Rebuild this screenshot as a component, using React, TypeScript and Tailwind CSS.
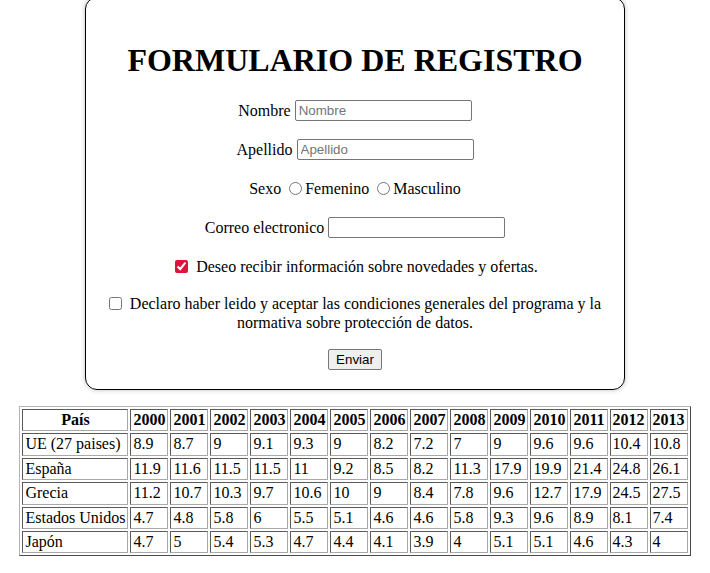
import React from "react";

const years = ["2000","2001","2002","2003","2004","2005","2006","2007","2008","2009","2010","2011","2012","2013"];
const rows: [string, string[]][] = [
  ["UE (27 paises)", ["8.9","8.7","9","9.1","9.3","9","8.2","7.2","7","9","9.6","9.6","10.4","10.8"]],
  ["España", ["11.9","11.6","11.5","11.5","11","9.2","8.5","8.2","11.3","17.9","19.9","21.4","24.8","26.1"]],
  ["Grecia", ["11.2","10.7","10.3","9.7","10.6","10","9","8.4","7.8","9.6","12.7","17.9","24.5","27.5"]],
  ["Estados Unidos", ["4.7","4.8","5.8","6","5.5","5.1","4.6","4.6","5.8","9.3","9.6","8.9","8.1","7.4"]],
  ["Japón", ["4.7","5","5.4","5.3","4.7","4.4","4.1","3.9","4","5.1","5.1","4.6","4.3","4"]],
];

const cell = "border border-t-[#5a5a5a] border-l-[#5a5a5a] border-b-[#a8a8a8] border-r-[#a8a8a8] py-[1px] px-[2px] leading-[18.4px]";

export default function App() {
  return (
    <div className="bg-white text-black text-[16px] font-['Liberation_Serif','Times_New_Roman',serif] w-[710px] h-[573px] overflow-hidden">
      <div className="w-[540px] mx-auto -mt-[3px] border border-black rounded-[12px] shadow-[0_0_5px_rgba(0,0,0,0.25)] px-[16px] pt-[44px] pb-[19px] flex flex-col items-center">
        <h1 className="text-[32px] font-bold leading-[37px]">FORMULARIO DE REGISTRO</h1>
        <div className="mt-[20px] flex items-center gap-[4px] h-[23px]">
          <span>Nombre</span>
          <input placeholder="Nombre" className="w-[177px] h-[21px] border border-[#767676] rounded-[2px] px-[3px] text-[13.33px] font-['Liberation_Sans',Arial,sans-serif] placeholder:text-[#757575] outline-none" />
        </div>
        <div className="mt-[16px] flex items-center gap-[4px] h-[23px]">
          <span>Apellido</span>
          <input placeholder="Apellido" className="w-[177px] h-[21px] border border-[#767676] rounded-[2px] px-[3px] text-[13.33px] font-['Liberation_Sans',Arial,sans-serif] placeholder:text-[#757575] outline-none" />
        </div>
        <div className="mt-[16px] flex items-center h-[23px]">
          <span>Sexo</span>
          <input type="radio" name="s" className="ml-[8px] mr-[3px] w-[13px] h-[13px]" />
          <span>Femenino</span>
          <input type="radio" name="s" className="ml-[8px] mr-[3px] w-[13px] h-[13px]" />
          <span>Masculino</span>
        </div>
        <div className="mt-[16px] flex items-center gap-[4px] h-[23px]">
          <span>Correo electronico</span>
          <input className="w-[177px] h-[21px] border border-[#767676] rounded-[2px] px-[3px] text-[13.33px] outline-none" />
        </div>
        <div className="mt-[16px] flex items-center h-[23px]">
          <input type="checkbox" defaultChecked className="accent-[#dc143c] w-[13px] h-[13px] mr-[8px] ml-[3px]" />
          <span>Deseo recibir información sobre novedades y ofertas.</span>
        </div>
        <p className="mt-[16px] text-center leading-[19px]">
          <input type="checkbox" className="w-[13px] h-[13px] mr-[8px] align-[-1px]" />
          Declaro haber leido y aceptar las condiciones generales del programa y la normativa sobre protección de datos.
        </p>
        <button className="mt-[17px] h-[21px] px-[7px] bg-[#efefef] border border-[#767676] rounded-[2px] text-[13.33px] leading-[17px] font-['Liberation_Sans',Arial,sans-serif]">Enviar</button>
      </div>
      <table className="mx-auto mt-[16px] border-separate border-spacing-[2px] border border-t-[#b5b5b5] border-l-[#b5b5b5] border-b-[#4a4a4a] border-r-[#4a4a4a]">
        <thead>
          <tr>
            <th className={cell + " text-center"}>País</th>
            {years.map((y) => (
              <th key={y} className={cell + " text-center"}>{y}</th>
            ))}
          </tr>
        </thead>
        <tbody>
          {rows.map(([name, vals]) => (
            <tr key={name}>
              <td className={cell + " text-left"}>{name}</td>
              {vals.map((v, i) => (
                <td key={i} className={cell + " text-left"}>{v}</td>
              ))}
            </tr>
          ))}
        </tbody>
      </table>
    </div>
  );
}
